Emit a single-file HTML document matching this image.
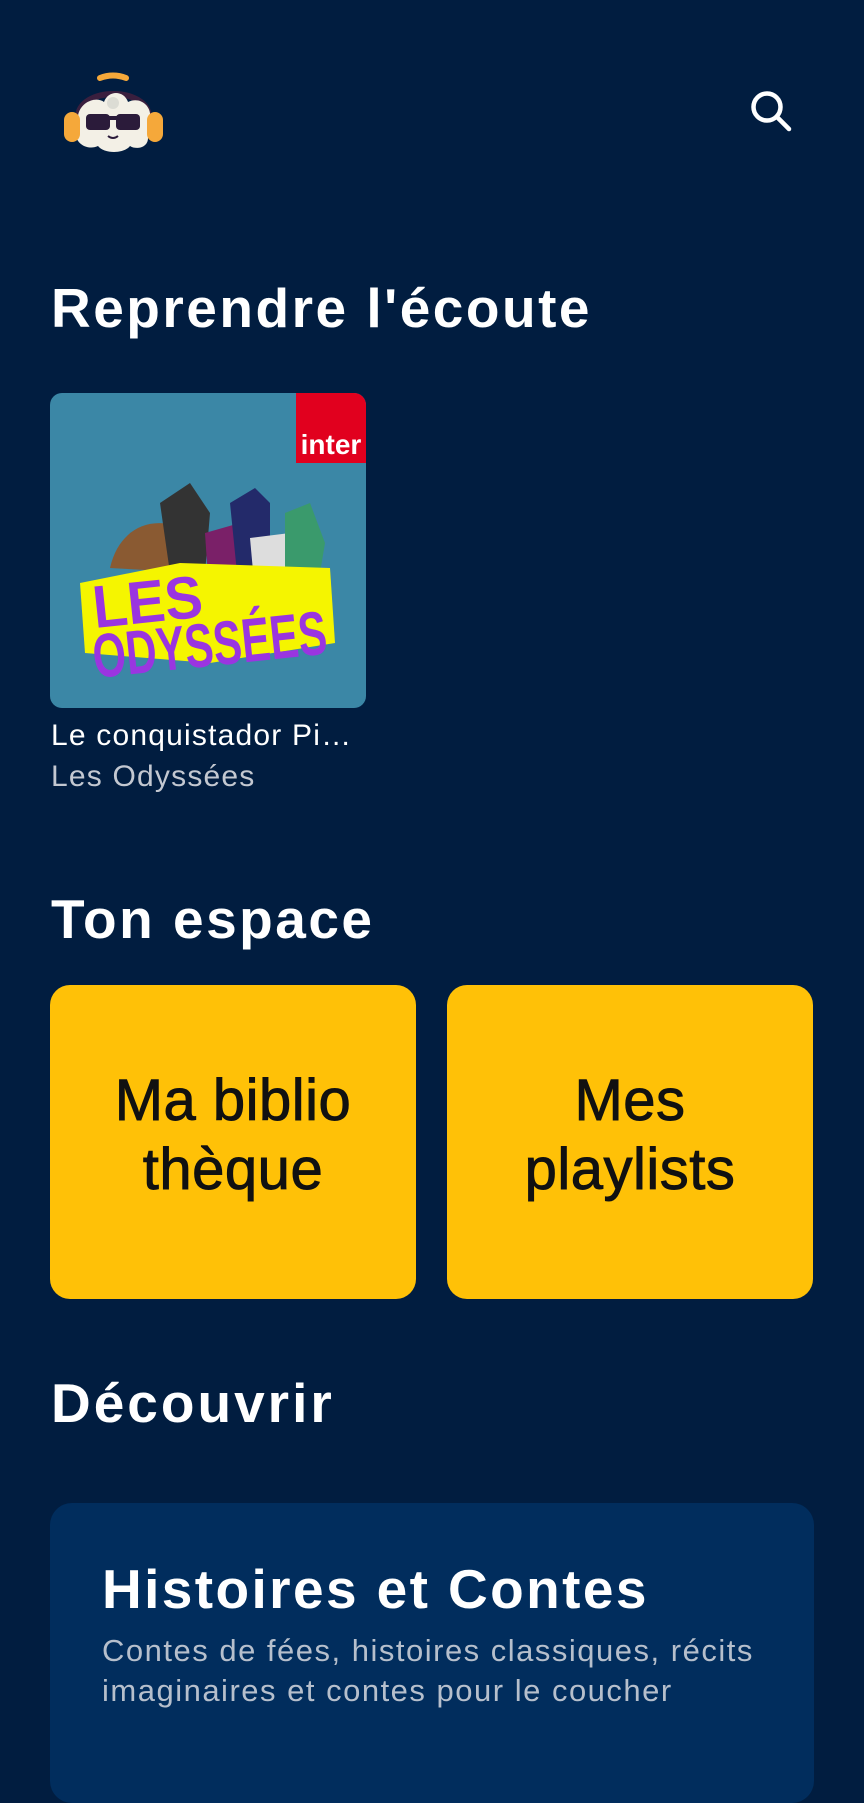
<!DOCTYPE html>
<html><head><meta charset="utf-8"><style>
*{margin:0;padding:0;box-sizing:border-box}
body{width:864px;height:1761px;background:#011d40;overflow:hidden;position:relative;font-family:"Liberation Sans",sans-serif;color:#fff}
.h{position:absolute;left:51px;font-size:55px;font-weight:bold;line-height:54px;white-space:nowrap;letter-spacing:2.5px}
.card{position:absolute;top:985px;width:366px;height:314px;background:#ffc107;border-radius:20px;color:#111;font-size:58px;line-height:69px;text-align:center;-webkit-text-stroke:0.9px #111;letter-spacing:0.5px}
</style></head><body>
<svg style="position:absolute;left:56px;top:66px" width="115" height="95" viewBox="0 0 115 95">
<path d="M22 52 C22 20 93 20 93 52" fill="none" stroke="#3a1f3e" stroke-width="6"/>
<path d="M44 12 Q57 7 70 12" fill="none" stroke="#f5a83a" stroke-width="6" stroke-linecap="round"/>
<path d="M20 70 C8 70 8 52 22 50 C24 36 40 30 48 36 C52 24 68 24 72 36 C84 30 96 40 94 52 C106 54 104 72 92 72 C92 82 80 84 74 80 C68 88 48 88 42 80 C34 84 22 80 20 70Z" fill="#f3f0e6"/>
<circle cx="57" cy="37" r="6" fill="#dcdcd4"/>
<rect x="30" y="48" width="24" height="16" rx="4" fill="#2b1b3a"/>
<rect x="60" y="48" width="24" height="16" rx="4" fill="#2b1b3a"/>
<rect x="52" y="50" width="10" height="4" fill="#2b1b3a"/>
<path d="M52 70 Q57 74 62 70" stroke="#2b1b3a" stroke-width="2" fill="none"/>
<rect x="8" y="46" width="16" height="30" rx="8" fill="#f5a83a"/>
<rect x="91" y="46" width="16" height="30" rx="8" fill="#f5a83a"/>
</svg>
<svg style="position:absolute;left:746px;top:86px" width="50" height="50" viewBox="0 0 50 50">
<circle cx="21" cy="21" r="13.5" fill="none" stroke="#fff" stroke-width="4.5"/>
<line x1="31" y1="31" x2="43" y2="43" stroke="#fff" stroke-width="4.5" stroke-linecap="round"/>
</svg>
<div class="h" style="top:281px">Reprendre l'écoute</div>
<div style="position:absolute;left:50px;top:393px;width:316px;height:315px;border-radius:12px;background:#3b87a6;overflow:hidden">
<div style="position:absolute;right:0;top:0;width:70px;height:70px;background:#e1001e;color:#fff;font-weight:bold;font-size:28px;line-height:28px;padding-top:38px;text-align:center">inter</div>
<svg style="position:absolute;left:0;top:0" width="316" height="315">
<path d="M60 175 C70 130 110 120 140 140 L150 180 Z" fill="#8a5a32"/>
<path d="M110 110 L140 90 L160 120 L155 180 L120 180Z" fill="#333"/>
<path d="M155 140 L190 130 L200 210 L160 215Z" fill="#7a2068"/>
<path d="M180 110 L205 95 L220 110 L220 200 L190 210Z" fill="#232a6a"/>
<path d="M200 145 L240 140 L235 200 L205 200Z" fill="#ddd"/>
<path d="M235 120 L260 110 L275 150 L265 210 L235 205Z" fill="#3a9a6c"/>
<path d="M30 190 L130 170 L280 175 L285 250 L160 270 L35 260Z" fill="#f5f500"/>
<text x="45" y="235" font-family="Liberation Sans" font-weight="bold" font-size="60" fill="#9a35e0" transform="rotate(-6 45 235)" textLength="110" lengthAdjust="spacingAndGlyphs">LES</text>
<text x="45" y="285" font-family="Liberation Sans" font-weight="bold" font-size="62" fill="#9a35e0" transform="rotate(-6 45 285)" textLength="235" lengthAdjust="spacingAndGlyphs">ODYSSÉES</text>
</svg>
</div>
<div style="position:absolute;left:51px;top:719px;font-size:30px;line-height:34px;letter-spacing:1.2px;white-space:nowrap">Le conquistador Pi…</div>
<div style="position:absolute;left:51px;top:760px;font-size:30px;line-height:34px;color:#c3c8d1;letter-spacing:1.2px">Les Odyssées</div>
<div class="h" style="top:892px">Ton espace</div>
<div class="card" style="left:50px;padding-top:81px">Ma biblio<br>thèque</div>
<div class="card" style="left:447px;padding-top:81px">Mes<br>playlists</div>
<div class="h" style="top:1376px;letter-spacing:3px">Découvrir</div>
<div style="position:absolute;left:50px;top:1503px;width:764px;height:300px;background:#012d5d;border-radius:22px">
<div style="position:absolute;left:52px;top:59px;font-size:55px;font-weight:bold;line-height:55px;white-space:nowrap;letter-spacing:2.4px">Histoires et Contes</div>
<div style="position:absolute;left:52px;top:128px;font-size:31px;line-height:40px;color:#b6bfcc;width:700px;letter-spacing:1.5px">Contes de fées, histoires classiques, récits imaginaires et contes pour le coucher</div>
</div>
</body></html>
